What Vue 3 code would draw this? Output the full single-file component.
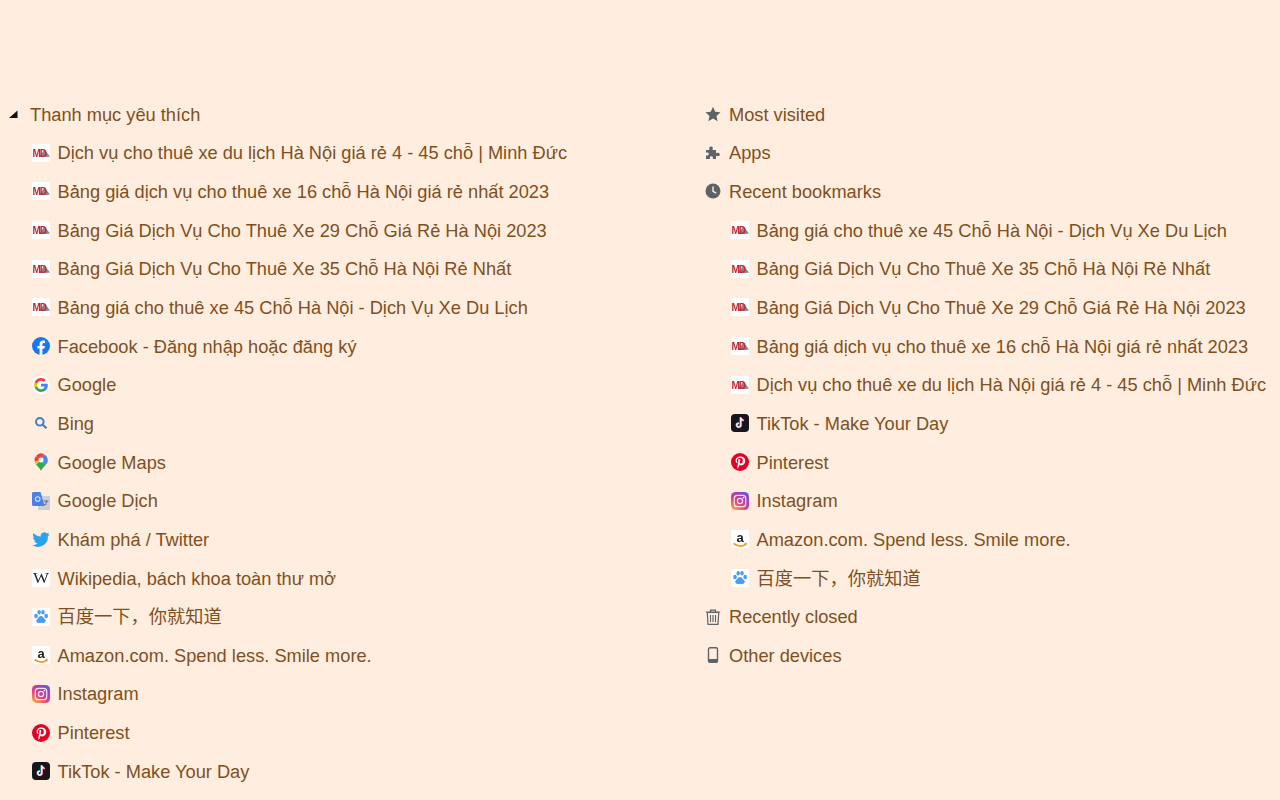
<script setup>
const md1 = 'Dịch vụ cho thuê xe du lịch Hà Nội giá rẻ 4 - 45 chỗ | Minh Đức'
const md16 = 'Bảng giá dịch vụ cho thuê xe 16 chỗ Hà Nội giá rẻ nhất 2023'
const md29 = 'Bảng Giá Dịch Vụ Cho Thuê Xe 29 Chỗ Giá Rẻ Hà Nội 2023'
const md35 = 'Bảng Giá Dịch Vụ Cho Thuê Xe 35 Chỗ Hà Nội Rẻ Nhất'
const md45 = 'Bảng giá cho thuê xe 45 Chỗ Hà Nội - Dịch Vụ Xe Du Lịch'

const sub = (icon, text) => ({ icon, text, sub: true })
const head = (icon, text) => ({ icon, text, sub: false })

const columns = [
  [
    head('tri', 'Thanh mục yêu thích'),
    sub('md', md1),
    sub('md', md16),
    sub('md', md29),
    sub('md', md35),
    sub('md', md45),
    sub('facebook', 'Facebook - Đăng nhập hoặc đăng ký'),
    sub('google', 'Google'),
    sub('bing', 'Bing'),
    sub('maps', 'Google Maps'),
    sub('translate', 'Google Dịch'),
    sub('twitter', 'Khám phá / Twitter'),
    sub('wiki', 'Wikipedia, bách khoa toàn thư mở'),
    sub('baidu', '百度一下，你就知道'),
    sub('amazon', 'Amazon.com. Spend less. Smile more.'),
    sub('instagram', 'Instagram'),
    sub('pinterest', 'Pinterest'),
    sub('tiktok', 'TikTok - Make Your Day'),
  ],
  [
    head('star', 'Most visited'),
    head('puzzle', 'Apps'),
    head('clock', 'Recent bookmarks'),
    sub('md', md45),
    sub('md', md35),
    sub('md', md29),
    sub('md', md16),
    sub('md', md1),
    sub('tiktok', 'TikTok - Make Your Day'),
    sub('pinterest', 'Pinterest'),
    sub('instagram', 'Instagram'),
    sub('amazon', 'Amazon.com. Spend less. Smile more.'),
    sub('baidu', '百度一下，你就知道'),
    head('trash', 'Recently closed'),
    head('phone', 'Other devices'),
  ],
]
</script>

<template>
  <div class="page">
    <div v-for="(col, c) in columns" :key="c" class="col">
      <div v-for="(item, i) in col" :key="i" class="row" :class="item.sub ? 'sub' : 'head'">
        <!-- system icons -->
        <svg v-if="!item.sub" class="sys" viewBox="0 0 16 16">
          <path v-if="item.icon === 'tri'" d="M11.500 4.500V12H3z" fill="#111" />
          <path v-else-if="item.icon === 'star'" d="m8 .8 2.200 4.900 5.300.6-4 3.600 1.100 5.300L8 12.500l-4.600 2.700 1.100-5.300-4-3.600 5.300-.6z" fill="#5f6368" />
          <path v-else-if="item.icon === 'puzzle'" d="M1 5h3.500c-.8-2.500 0-3.500 1.500-3.500S8.300 2.500 7.500 5H11v3.200c2.300-.8 3.800-.2 3.800 1.300s-1.500 2.100-3.800 1.300V14H7.800c.7-2-.2-2.800-1.500-2.800S4.500 12 5.200 14H1v-3.800c1.800.6 2.800-.2 2.800-1.300S2.800 7 1 7.700z" fill="#5f6368" />
          <template v-else-if="item.icon === 'clock'">
            <circle cx="8" cy="8" r="7.500" fill="#5f6368" />
            <path d="M8 3.500V8.300l3.200 1.900" fill="none" stroke="#ffeee0" stroke-width="1.400" />
          </template>
          <template v-else-if="item.icon === 'trash'">
            <path d="M.8 3h14.400M5.500 3V1.200h5V3M2.300 3.500l.7 11.800h10l.7-11.800z" fill="none" stroke="#5f6368" stroke-width="1.200" />
            <path d="M5.500 6v7M8 6v7M10.500 6v7" stroke="#5f6368" stroke-width="1.100" />
          </template>
          <template v-else-if="item.icon === 'phone'">
            <rect x="3.500" y="0.700" width="9" height="14.600" rx="1.500" fill="none" stroke="#5f6368" stroke-width="1.400" />
            <rect x="3.500" y="12" width="9" height="3.300" fill="#5f6368" />
          </template>
        </svg>

        <!-- site favicons -->
        <svg v-else class="fav" viewBox="0 0 18 18">
          <template v-if="item.icon === 'md'">
            <rect width="18" height="18" fill="#fff" />
            <path d="M7 13 12.500 5.500 18 12.500 14 13z" fill="#8b8285" />
            <text x="0.500" y="12.500" class="md">MD</text>
          </template>
          <template v-else-if="item.icon === 'facebook'">
            <circle cx="9" cy="9" r="9" fill="#1778f2" />
            <path d="M12.500 11.600 12.900 9h-2.500V7.300c0-.7.400-1.400 1.500-1.400H13V3.700s-1-.2-2-.2c-2 0-3.400 1.200-3.400 3.500V9H5.300v2.600h2.300V18h2.800v-6.400z" fill="#fff" />
          </template>
          <template v-else-if="item.icon === 'google'">
            <circle cx="9" cy="9" r="9" fill="#fff" />
            <path d="M15.800 9.200c0-.5 0-1-.1-1.500H9v2.900h3.700c-.2.800-.6 1.400-1.300 1.900v1.800h2.300c1.300-1.200 2.100-3 2.100-5.100z" fill="#4285f4" />
            <path d="M9 16c1.900 0 3.400-.6 4.700-1.700l-2.300-1.800c-.6.400-1.400.7-2.400.7-1.800 0-3.400-1.300-3.900-3H2.800v1.900C4 14.500 6.300 16 9 16z" fill="#34a853" />
            <path d="M5.100 10.200c-.3-.8-.3-1.600 0-2.400V5.900H2.800c-.8 1.900-.8 4.300 0 6.200z" fill="#fbbc05" />
            <path d="M9 4.800c1 0 2 .4 2.700 1.100l2-2C12.500 2.700 10.900 2 9 2 6.300 2 4 3.500 2.800 5.900l2.300 1.900C5.600 6.100 7.200 4.800 9 4.800z" fill="#ea4335" />
          </template>
          <template v-else-if="item.icon === 'bing'">
            <circle cx="7.800" cy="7.800" r="3.800" fill="none" stroke="#3f7fc4" stroke-width="2" />
            <path d="m10.800 10.800 3.700 3.400" stroke="#3f7fc4" stroke-width="2.200" />
          </template>
          <template v-else-if="item.icon === 'maps'">
            <path d="M4 11.500C5.500 13.500 8 15 9 18c1-3 3.500-4.500 5-6.500L9 7z" fill="#34a853" />
            <path d="M3 9.500c.2.800.5 1.400 1 2L9 7 4.200 4.300z" fill="#fbbc05" />
            <path d="M4 3A6.500 6.500 0 0 0 2.700 8.500L9 7z" fill="#ea4335" />
            <path d="M4 3A6.500 6.500 0 0 1 12 1.200L9 7z" fill="#ea4335" />
            <path d="M12 1.200A6.500 6.500 0 0 1 14 11.500L9 7z" fill="#4285f4" />
            <circle cx="9" cy="7" r="2.500" fill="#fff" />
          </template>
          <template v-else-if="item.icon === 'translate'">
            <rect x="6" y="4" width="12" height="14" fill="#ccd0d6" />
            <path d="M11.500 9h5M14 8v5M12 13.500l3.500-4" stroke="#777c84" stroke-width="1.100" fill="none" />
            <path d="M1.500 0H8.500L12.500 14H1.500A1.500 1.500 0 0 1 0 12.500V1.500A1.500 1.500 0 0 1 1.500 0z" fill="#4a80e8" />
            <circle cx="5.700" cy="7" r="2.300" fill="none" stroke="#d5e2fa" stroke-width="1.100" />
          </template>
          <path v-else-if="item.icon === 'twitter'" d="M17.500 3.900c-.6.300-1.300.5-2 .6.700-.4 1.300-1.100 1.500-1.900-.7.400-1.400.7-2.200.8a3.500 3.500 0 0 0-6 3.200C5.900 6.500 3.300 5.100 1.600 3a3.500 3.500 0 0 0 1.100 4.700c-.6 0-1.100-.2-1.600-.4 0 1.700 1.200 3.100 2.800 3.400-.5.100-1 .2-1.600.1.400 1.400 1.700 2.400 3.300 2.400A7 7 0 0 1 .5 15.200 10 10 0 0 0 15.900 6.300c.7-.5 1.200-1.100 1.600-2.400z" fill="#2aa3ef" />
          <template v-else-if="item.icon === 'wiki'">
            <rect width="18" height="18" fill="#fff" />
            <text x="1" y="13.500" class="wiki" textLength="16" lengthAdjust="spacingAndGlyphs">W</text>
          </template>
          <template v-else-if="item.icon === 'baidu'">
            <rect width="18" height="18" fill="#fff" />
            <ellipse cx="4" cy="8" rx="1.800" ry="2.300" fill="#4a9bf5" />
            <ellipse cx="7.200" cy="4.300" rx="1.700" ry="2.300" fill="#4a9bf5" />
            <ellipse cx="11" cy="4.300" rx="1.700" ry="2.300" fill="#4a9bf5" />
            <ellipse cx="14.200" cy="8" rx="1.800" ry="2.300" fill="#4a9bf5" />
            <path d="M9 8c-2 0-2.400 2-4 3.300-1.400 1.300-.6 3.700 1.600 3.700 1 0 1.500-.3 2.400-.3s1.400.3 2.400.3c2.200 0 3-2.400 1.600-3.700C11.400 10 11 8 9 8z" fill="#4a9bf5" />
          </template>
          <template v-else-if="item.icon === 'amazon'">
            <rect width="18" height="18" fill="#fff" />
            <text x="9" y="11.500" class="amazon">a</text>
            <path d="M2.500 13.500c4 3 9 3 12.500.8" fill="none" stroke="#f29a1f" stroke-width="1.600" />
            <path d="m13 13 3-.3-.8 2.600z" fill="#f29a1f" />
          </template>
          <template v-else-if="item.icon === 'instagram'">
            <defs>
              <linearGradient id="ig" x1="0.100" y1="1" x2="0.800" y2="0">
                <stop offset="0" stop-color="#f9b44a" />
                <stop offset="0.400" stop-color="#e2407c" />
                <stop offset="0.750" stop-color="#a63cc0" />
                <stop offset="1" stop-color="#5a5fdc" />
              </linearGradient>
            </defs>
            <rect width="18" height="18" rx="4.500" fill="url(#ig)" />
            <rect x="3.300" y="3.300" width="11.400" height="11.400" rx="3" fill="none" stroke="#fff" stroke-opacity=".85" stroke-width="1.300" />
            <circle cx="9" cy="9" r="2.600" fill="none" stroke="#fff" stroke-opacity=".85" stroke-width="1.300" />
            <circle cx="12.400" cy="5.600" r=".8" fill="#fff" />
          </template>
          <template v-else-if="item.icon === 'pinterest'">
            <circle cx="9" cy="9" r="9" fill="#e60023" />
            <path d="M9.300 3.500C6.200 3.500 4.600 5.500 4.600 7.600c0 1 .5 2.200 1.400 2.600.3.100.3-.1.500-.7 0-.2 0-.3-.1-.4-.3-.4-.5-.9-.5-1.400 0-1.500 1.100-2.900 3.100-2.900 1.700 0 2.800 1.100 2.800 2.700 0 1.800-.9 3.100-2.100 3.100-.7 0-1.200-.5-1-1.200.2-.8.600-1.700.6-2.300 0-.5-.3-1-.9-1-.7 0-1.200.7-1.200 1.700 0 .6.200 1 .2 1l-.9 3.600c-.2 1-.1 2.200 0 3.300l.3.100c.6-.8 1.100-1.900 1.300-2.700l.4-1.500c.3.500 1 .9 1.800.9 2.300 0 4-2.100 4-4.700 0-2.500-2.100-4.300-4.900-4.300z" fill="#fff" />
          </template>
          <template v-else-if="item.icon === 'tiktok'">
            <rect width="18" height="18" rx="4" fill="#18151c" />
            <path d="M9.800 3.500v7.700a2 2 0 1 1-1.800-2M9.800 3.500c.2 1.700 1.200 2.700 2.800 2.900" fill="none" stroke="#25f4ee" stroke-width="1.500" transform="translate(-.5 -.3)" />
            <path d="M9.800 3.500v7.700a2 2 0 1 1-1.800-2M9.800 3.500c.2 1.700 1.200 2.700 2.800 2.900" fill="none" stroke="#fe2c55" stroke-width="1.500" transform="translate(.5 .3)" />
            <path d="M9.800 3.500v7.700a2 2 0 1 1-1.800-2M9.800 3.500c.2 1.700 1.200 2.700 2.800 2.900" fill="none" stroke="#fff" stroke-width="1.300" />
          </template>
        </svg>

        <span class="label">{{ item.text }}</span>
      </div>
    </div>
  </div>
</template>

<style scoped>
.page {
  display: grid;
  grid-template-columns: 699px 1fr;
  height: 800px;
  box-sizing: border-box;
  padding: 94.8px 0 0 6px;
  overflow: hidden;
  background: #ffeee0;
  color: #7f4f20;
  font-family: "Liberation Sans", "Noto Sans CJK SC", sans-serif;
  font-size: 18.24px;
}
.col {
  display: flex;
  flex-direction: column;
  min-width: 0;
}
.row {
  display: flex;
  align-items: center;
  height: 38.67px;
  flex: none;
  white-space: nowrap;
}
.label {
  line-height: 21px;
}
.head {
  gap: 8px;
}
.sub {
  padding-left: 26px;
  gap: 7.500px;
}
.sys {
  width: 16px;
  height: 16px;
  flex: none;
}
.fav {
  width: 18px;
  height: 18px;
  flex: none;
  filter: blur(0.3px);
}
.md {
  font: bold 10px "Liberation Sans", sans-serif;
  fill: #c22a36;
  letter-spacing: -1px;
}
.wiki {
  font: 14px "Liberation Serif", serif;
  fill: #222;
}
.amazon {
  font: bold 13px "Liberation Sans", sans-serif;
  fill: #222;
  text-anchor: middle;
}
</style>

<style>
html, body {
  background: #ffeee0;
}
</style>
